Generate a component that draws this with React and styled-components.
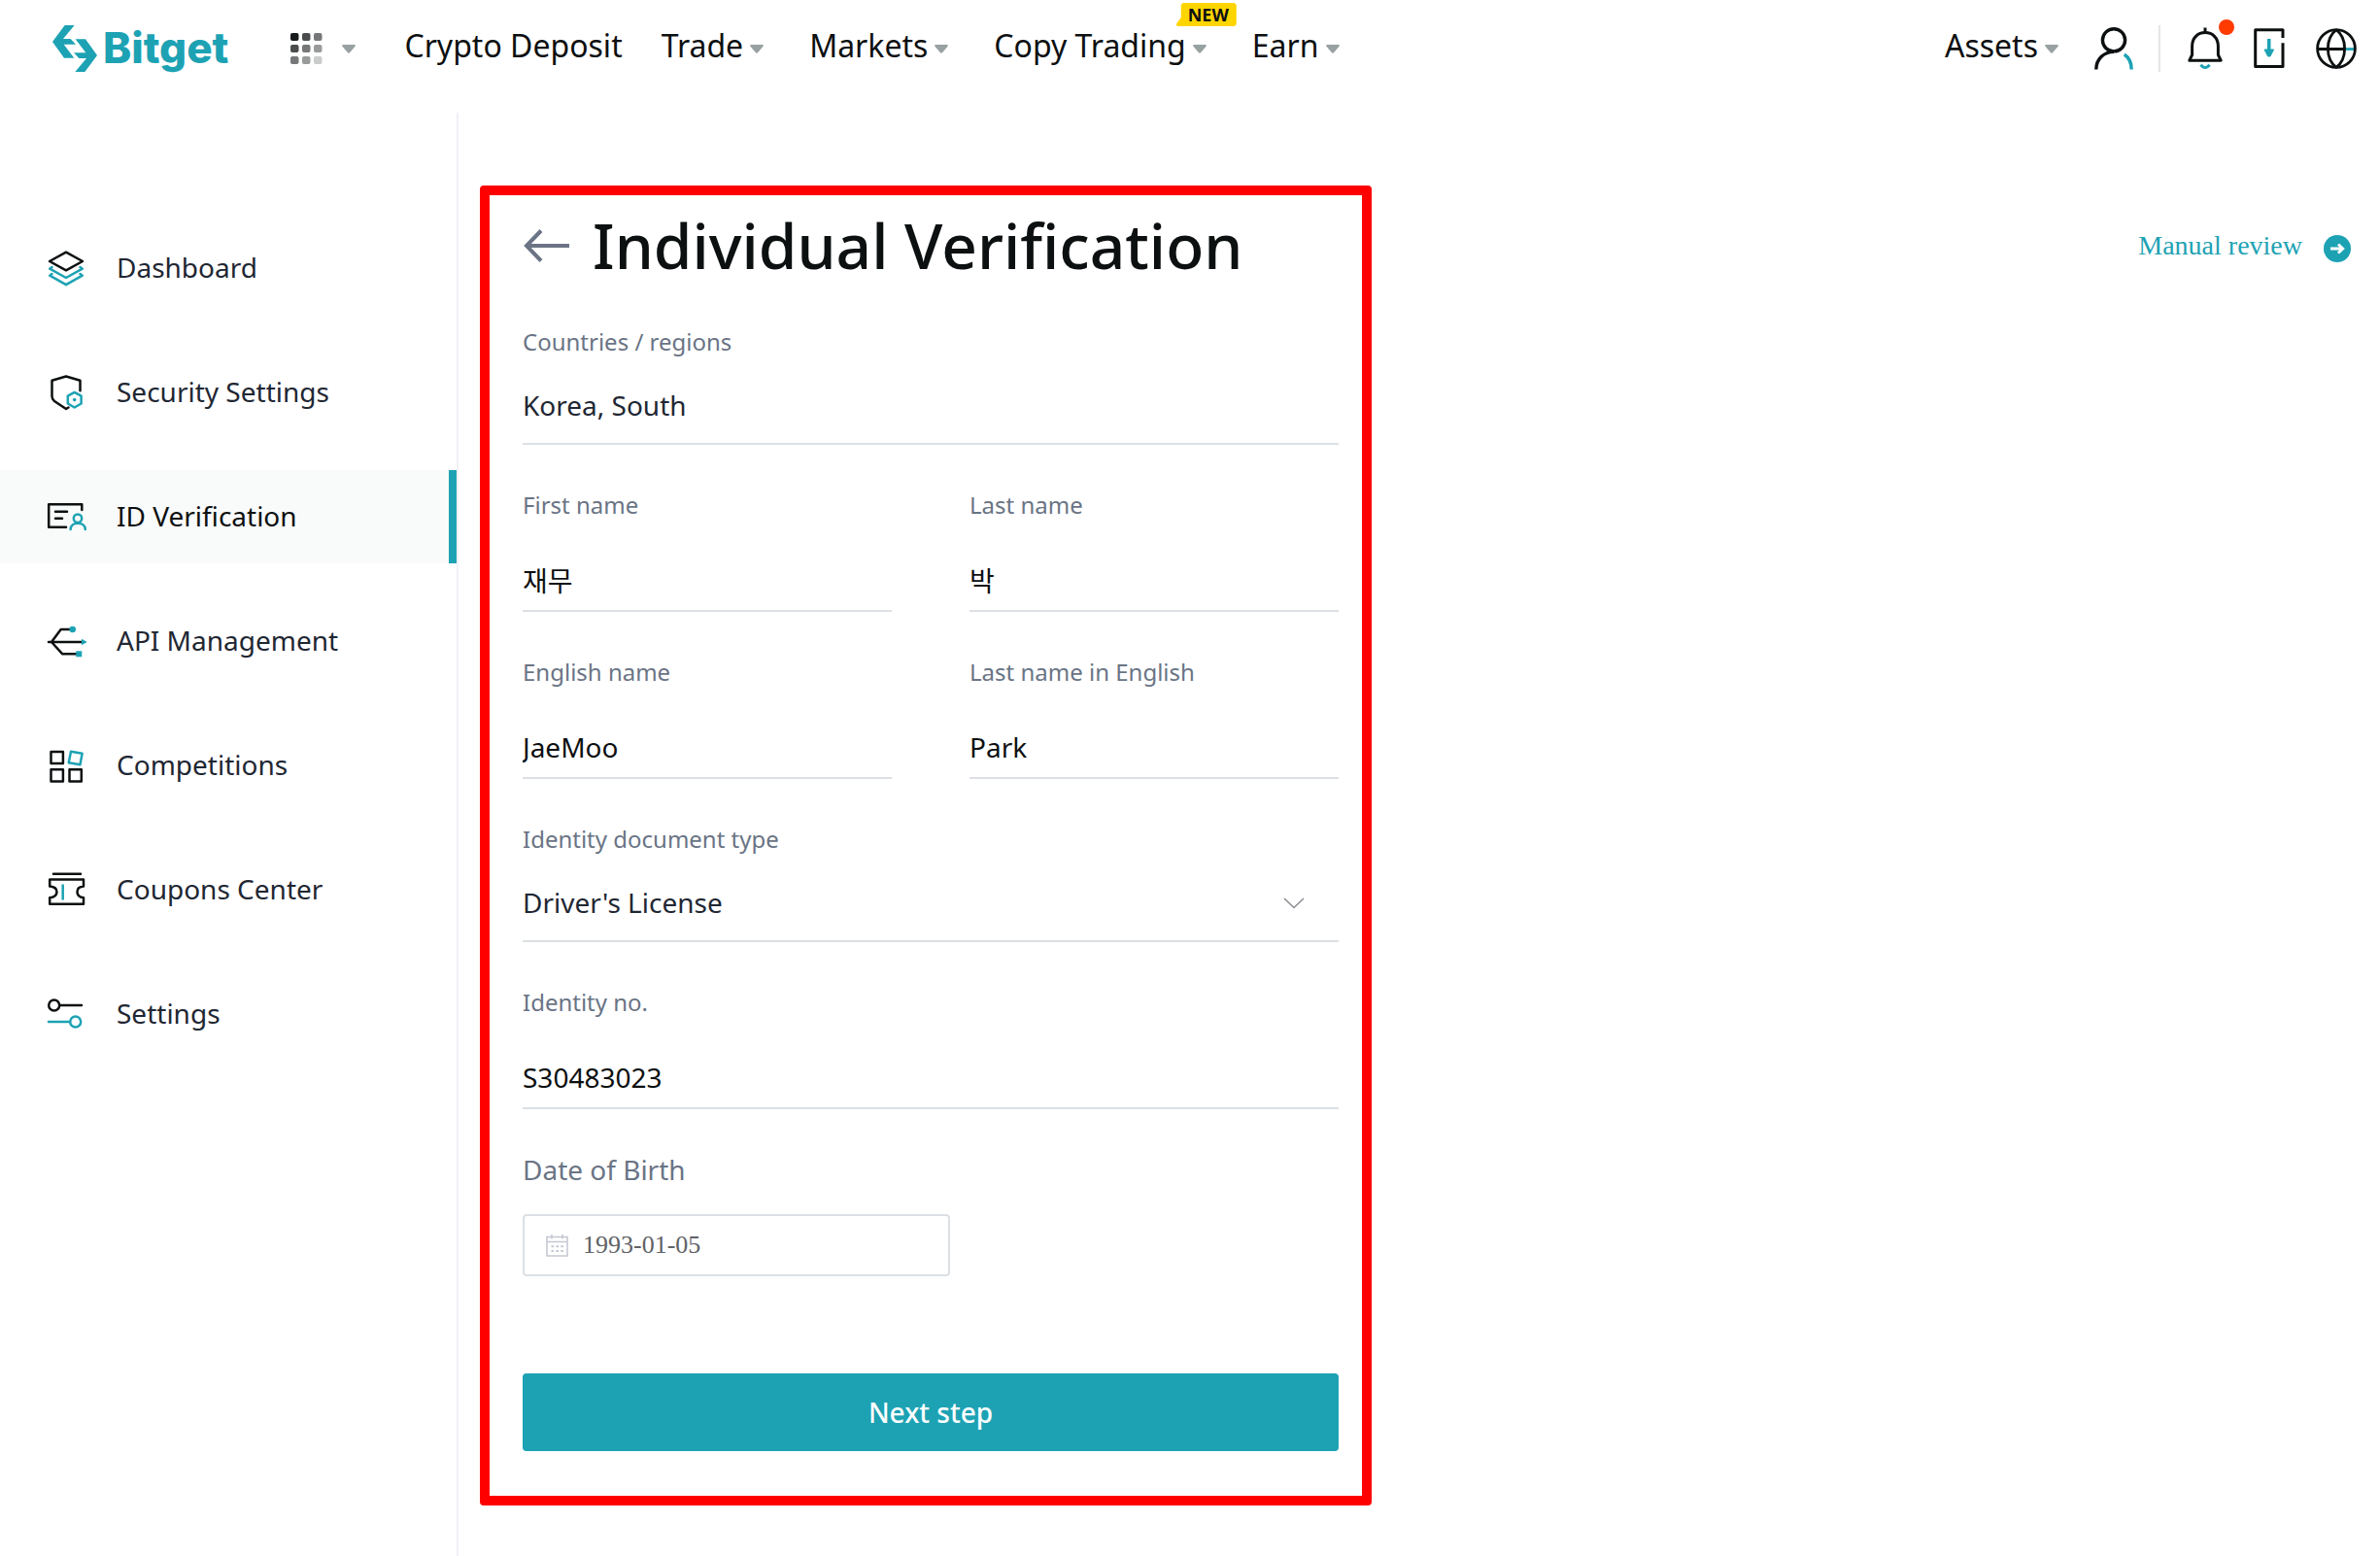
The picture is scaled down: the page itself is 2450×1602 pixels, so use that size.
import React, { useState } from 'react';
import styled, { createGlobalStyle } from 'styled-components';

const colors = {
  primary: '#1da2b4',
  black: '#0d1011',
  text: '#1f2733',
  label: '#6a7485',
  line: '#dce0e4',
  divider: '#f1f1f6',
  caret: '#98a1a1',
  active: '#f9fafa',
  frame: '#ff0000',
  alert: '#ff3b00',
  badge: '#ffd500',
};

const menu = [
  { title: 'Dashboard', Icon: DashboardIcon },
  { title: 'Security Settings', Icon: SecurityIcon },
  { title: 'ID Verification', Icon: IdIcon, active: true },
  { title: 'API Management', Icon: ApiIcon },
  { title: 'Competitions', Icon: CompetitionsIcon },
  { title: 'Coupons Center', Icon: CouponsIcon },
  { title: 'Settings', Icon: SettingsIcon },
];

const navItems = [
  { title: 'Crypto Deposit' },
  { title: 'Trade', dropdown: true },
  { title: 'Markets', dropdown: true },
  { title: 'Copy Trading', dropdown: true, badge: 'NEW' },
  { title: 'Earn', dropdown: true },
];

export default function App() {
  return (
    <>
      <GlobalStyle />
      <TopBar />
      <Layout>
        <Sidebar />
        <Content>
          <VerificationForm />
          <ManualReview href="#">
            <span>Manual review</span>
            <ArrowBadge />
          </ManualReview>
        </Content>
      </Layout>
    </>
  );
}

function TopBar() {
  return (
    <Header>
      <Logo href="#" aria-label="Bitget">
        <LogoMark />
        <span>Bitget</span>
      </Logo>
      <AppsButton type="button" aria-label="Products">
        <GridIcon />
        <Caret />
      </AppsButton>
      <Nav>
        {navItems.map(({ title, dropdown, badge }) => (
          <NavLink href="#" key={title}>
            <NavText>{title}</NavText>
            {dropdown && (
              <CaretBox>
                <Caret />
              </CaretBox>
            )}
            {badge && <Badge>{badge}</Badge>}
          </NavLink>
        ))}
      </Nav>
      <Tools>
        <NavLink href="#">
          <NavText>Assets</NavText>
          <CaretBox>
            <Caret />
          </CaretBox>
        </NavLink>
        <IconButton type="button" aria-label="Account">
          <UserIcon />
        </IconButton>
        <Separator />
        <IconButton type="button" aria-label="Notifications">
          <BellIcon />
          <Dot />
        </IconButton>
        <IconButton type="button" aria-label="Download app">
          <DownloadIcon />
        </IconButton>
        <IconButton type="button" aria-label="Language">
          <GlobeIcon />
        </IconButton>
      </Tools>
    </Header>
  );
}

function Sidebar() {
  return (
    <Aside>
      {menu.map(({ title, Icon, active }) => (
        <MenuLink href="#" key={title} $active={active}>
          <Icon />
          <span>{title}</span>
        </MenuLink>
      ))}
    </Aside>
  );
}

function VerificationForm() {
  const [values, setValues] = useState({
    country: 'Korea, South',
    firstName: '재무',
    lastName: '박',
    englishName: 'JaeMoo',
    englishLastName: 'Park',
    documentType: "Driver's License",
    identityNo: 'S30483023',
    birth: '1993-01-05',
  });

  const bind = (name) => ({
    id: name,
    value: values[name],
    onChange: (e) => setValues({ ...values, [name]: e.target.value }),
  });

  return (
    <Form onSubmit={(e) => e.preventDefault()}>
      <TitleRow>
        <BackButton type="button" aria-label="Back">
          <BackIcon />
        </BackButton>
        <Title>Individual Verification</Title>
      </TitleRow>
      <Field>
        <Label htmlFor="country">Countries / regions</Label>
        <SelectBox>
          <Select {...bind('country')}>
            <option>Korea, South</option>
          </Select>
        </SelectBox>
      </Field>
      <Columns>
        <Field>
          <Label htmlFor="firstName">First name</Label>
          <Input {...bind('firstName')} />
        </Field>
        <Field>
          <Label htmlFor="lastName">Last name</Label>
          <Input {...bind('lastName')} />
        </Field>
      </Columns>
      <Columns>
        <Field>
          <Label htmlFor="englishName">English name</Label>
          <Input {...bind('englishName')} />
        </Field>
        <Field>
          <Label htmlFor="englishLastName">Last name in English</Label>
          <Input {...bind('englishLastName')} />
        </Field>
      </Columns>
      <Field>
        <Label htmlFor="documentType">Identity document type</Label>
        <SelectBox>
          <Select {...bind('documentType')}>
            <option>Driver's License</option>
          </Select>
          <ChevronIcon />
        </SelectBox>
      </Field>
      <Field>
        <Label htmlFor="identityNo">Identity no.</Label>
        <Input {...bind('identityNo')} />
      </Field>
      <Field>
        <Label htmlFor="birth" $large>
          Date of Birth
        </Label>
        <DateBox>
          <CalendarIcon />
          <DateInput {...bind('birth')} />
        </DateBox>
      </Field>
      <SubmitButton type="submit">Next step</SubmitButton>
    </Form>
  );
}

/* icons */

function LogoMark() {
  return (
    <svg width="46" height="48" viewBox="12 18 138 144" fill={colors.primary}>
      <path d="M50 18H80L45 60H68L84 77H47L79 119H48L12 69Z" />
      <path d="M112 162H82L117 120H94L78 103H115L83 61H114L150 111Z" />
    </svg>
  );
}

function GridIcon() {
  return (
    <svg width="33" height="32" viewBox="0 0 33 32">
      {[0, 1, 2].map((row) =>
        [0, 1, 2].map((col) => (
          <rect
            key={`${row}${col}`}
            x={col * 12}
            y={row * 12}
            width="8.5"
            height="8"
            rx="2"
            fill={colors.black}
            opacity={[0.95, 0.75, 0.57, 0.42, 0.22][row + col]}
          />
        ))
      )}
    </svg>
  );
}

function Caret() {
  return (
    <svg width="14" height="9" viewBox="0 0 14 9">
      <path
        d="M1.2 0H12.8Q14.6.2 13.6 1.8L8.2 8.1Q7 9.2 5.8 8.1L.4 1.8Q-.6.2 1.2 0Z"
        fill={colors.caret}
      />
    </svg>
  );
}

function UserIcon() {
  return (
    <Stroke width="40" height="44" viewBox="0 0 40 44" strokeWidth="3.4">
      <circle cx="20" cy="13.3" r="11.6" />
      <path d="M1.8 43.5C1.8 33 9.5 25.4 20 25.4" />
      <path d="M30.8 28C35.5 31.3 38.2 36.5 38.2 43.5" stroke={colors.primary} />
    </Stroke>
  );
}

function BellIcon() {
  return (
    <Stroke width="36" height="44" viewBox="0 0 36 44" strokeWidth="3">
      <path d="M18 .5V5.5" />
      <path d="M4.6 19.5C4.6 11 10.5 5.6 18 5.6S31.4 11 31.4 19.5V28.5L34.2 34.2H1.8L4.6 28.5Z" />
      <path d="M13.4 38.8Q18 44.6 22.6 38.8" stroke={colors.primary} />
    </Stroke>
  );
}

function DownloadIcon() {
  return (
    <Stroke width="32" height="42" viewBox="0 0 32 42" strokeWidth="3">
      <path d="M30 10V1.8H1.7V39.4H30V15.2" />
      <path d="M15.7 11V25" stroke={colors.primary} strokeWidth="3.6" />
      <path d="M11 22H20.6L17 29H14.6Z" fill={colors.primary} stroke={colors.primary} strokeWidth="1" />
    </Stroke>
  );
}

function GlobeIcon() {
  return (
    <Stroke width="42" height="42" viewBox="0 0 42 42" strokeWidth="2.8">
      <path d="M30 21.5H39" stroke={colors.primary} />
      <circle cx="21" cy="21" r="19.4" />
      <path d="M21 1.6C9.5 10.5 9.5 31.5 21 40.4C32.5 31.5 32.5 10.5 21 1.6M2 21.5H29" />
    </Stroke>
  );
}

function DashboardIcon() {
  return (
    <MenuIcon viewBox="0 0 40 40">
      <path d="M20 3.7L37 13L20 22.3L3 13Z" />
      <g stroke={colors.primary}>
        <path d="M5.5 19L3.2 20.7L20 30L36.8 20.7L34.5 19" />
        <path d="M5.5 26L3.2 27.7L20 37.2L36.8 27.7L34.5 26" />
      </g>
    </MenuIcon>
  );
}

function SecurityIcon() {
  return (
    <MenuIcon viewBox="0 0 40 40">
      <path d="M34.5 18.2V7.7L20 3.5L5.5 7.7V24Q5.5 27 8 29L20 37L22.5 35.5" />
      <path d="M28.7 19.9L35.6 23.7V31.5L28.7 35.5L21.8 31.5V23.7Z" stroke={colors.primary} />
      <circle cx="28.7" cy="27.6" r="1.8" fill={colors.primary} stroke="none" />
    </MenuIcon>
  );
}

function IdIcon() {
  return (
    <MenuIcon viewBox="0 0 40 40">
      <path d="M36.3 13V7.3H2.2V30.7H20" />
      <path d="M9 14.7H21M9 21.7H16" />
      <g stroke={colors.primary}>
        <circle cx="32" cy="21.7" r="4.2" />
        <path d="M24.6 33C24.6 24.5 39.8 24.5 39.8 33" />
      </g>
    </MenuIcon>
  );
}

function ApiIcon() {
  return (
    <MenuIcon viewBox="0 0 40 40">
      <path d="M2 21H37M26 8H14.7L5 21L16.3 33.3H31" />
      <g fill={colors.primary} stroke="none">
        <circle cx="26.7" cy="8" r="3.3" />
        <path d="M36 17.7L41.7 21L36 24.3Z" />
        <path d="M30.3 30.3H36.3V36.3H30.3Z" />
      </g>
    </MenuIcon>
  );
}

function CompetitionsIcon() {
  return (
    <MenuIcon viewBox="0 0 40 40">
      <path d="M4.5 6H16.9V18H4.5ZM4.5 24.3H16.9V36.5H4.5ZM23.5 24.3H35.8V36.5H23.5Z" />
      <path d="M25 5.7L36.6 7.8L34.5 19.3L22.7 17.2Z" stroke={colors.primary} />
    </MenuIcon>
  );
}

function CouponsIcon() {
  return (
    <MenuIcon viewBox="0 0 40 40">
      <path d="M7 3.7H35" />
      <path d="M3.2 9.5H38V16.5Q31.5 17 31.5 22.3T38 28.2V34.8H3.2V28.2Q10.5 27.5 10.5 22.3T3.2 16.5Z" />
      <path d="M16.7 15.5V29.5" stroke={colors.primary} />
    </MenuIcon>
  );
}

function SettingsIcon() {
  return (
    <MenuIcon viewBox="0 0 40 40">
      <circle cx="7.7" cy="11" r="5.5" />
      <path d="M13.5 11H36" />
      <g stroke={colors.primary}>
        <circle cx="29.7" cy="28" r="5.5" />
        <path d="M2 28H24" />
      </g>
    </MenuIcon>
  );
}

function BackIcon() {
  return (
    <svg width="48" height="34" viewBox="0 0 48 34" fill="none" stroke={colors.label}>
      <path d="M19 1.5L4 17L19 32.5M4 17H48" strokeWidth="4" />
    </svg>
  );
}

function ArrowBadge() {
  return (
    <svg width="28" height="28" viewBox="0 0 28 28">
      <circle cx="14" cy="14" r="14" fill={colors.primary} />
      <path d="M7 14H20M15 9.5L19.8 14L15 18.5" fill="none" stroke="#fff" strokeWidth="2.8" />
    </svg>
  );
}

function ChevronIcon() {
  return (
    <svg width="22" height="12" viewBox="0 0 22 12" fill="none" stroke="#8c8f93">
      <path d="M1 1L11 10.5L21 1" strokeWidth="1.6" />
    </svg>
  );
}

function CalendarIcon() {
  return (
    <svg width="23" height="23" viewBox="0 0 23 23" fill="none" stroke="#c3c7d1">
      <path d="M1 2.5H22V22H1ZM1 7.5H22M6 0V4.5M17 0V4.5" strokeWidth="1.5" />
      <path d="M5.5 12.3H18M5.5 17H18" strokeWidth="2" strokeDasharray="2.6 2.3" />
    </svg>
  );
}

/* styles */

const GlobalStyle = createGlobalStyle`
  * {
    box-sizing: border-box;
  }

  body {
    margin: 0;
    background-color: #fff;
    color: ${colors.black};
    font-family: 'Noto Sans', 'Noto Sans CJK KR', sans-serif;
    font-size: 28px;
  }

  a {
    color: inherit;
    text-decoration: none;
  }

  button,
  input,
  select {
    font: inherit;
    color: inherit;
    padding: 0;
    border: none;
    background: none;
  }

  svg {
    display: block;
    flex-shrink: 0;
    overflow: visible;
  }
`;

const Stroke = styled.svg`
  fill: none;
  stroke: ${colors.black};
  stroke-linejoin: round;
`;

const MenuIcon = styled.svg`
  width: 40px;
  height: 40px;
  fill: none;
  stroke: ${colors.black};
  stroke-width: 2.5;
  stroke-linejoin: round;
  stroke-linecap: round;
`;

const Header = styled.header`
  display: flex;
  align-items: center;
  height: 100px;
  margin-bottom: 16px;
  padding: 0 24px 0 54px;
`;

const Logo = styled.a`
  display: flex;
  align-items: center;
  gap: 6px;
  color: ${colors.primary};
  font-family: Inter, sans-serif;
  font-size: 44px;
  font-weight: 800;
  line-height: 48px;

  > span {
    padding-bottom: 2px;
  }
`;

const AppsButton = styled.button`
  display: flex;
  align-items: center;
  gap: 20px;
  margin-left: 64px;
`;

const Nav = styled.nav`
  display: flex;
  gap: 40px;
  margin-left: 50px;
`;

const NavLink = styled.a`
  position: relative;
  display: flex;
  align-items: center;
  font-size: 32px;
  line-height: 44px;
`;

const NavText = styled.span`
  padding-bottom: 6px;
`;

const CaretBox = styled.span`
  display: flex;
  justify-content: center;
  width: 28px;
`;

const Badge = styled.span`
  position: absolute;
  top: -22px;
  right: -24px;
  width: 62px;
  height: 24px;
  padding-left: 4px;
  background-color: ${colors.badge};
  clip-path: polygon(5px 2px, 7px 0, 60px 0, 62px 2px, 62px 22px, 60px 24px, 1px 24px, 0 22px, 5px 15px);
  font-size: 18px;
  font-weight: 700;
  line-height: 24px;
  text-align: center;
`;

const Tools = styled.div`
  display: flex;
  align-items: center;
  margin-left: auto;
`;

const IconButton = styled.button`
  position: relative;
  margin-left: 32px;

  &:first-of-type {
    margin-left: 30px;
  }
`;

const Separator = styled.span`
  width: 2px;
  height: 48px;
  margin: 0 -4px 0 26px;
  background-color: #e6e6e6;
`;

const Dot = styled.span`
  position: absolute;
  top: -8px;
  right: -12px;
  width: 16px;
  height: 16px;
  border-radius: 50%;
  background-color: ${colors.alert};
`;

const Layout = styled.div`
  display: flex;
  min-height: calc(100vh - 116px);
`;

const Aside = styled.nav`
  display: flex;
  flex-direction: column;
  gap: 32px;
  flex: 0 0 472px;
  padding-top: 112px;
  border-right: 2px solid ${colors.divider};
`;

const MenuLink = styled.a`
  display: flex;
  align-items: center;
  gap: 32px;
  height: 96px;
  padding-left: 48px;
  border-right: 8px solid ${({ $active }) => ($active ? colors.primary : 'transparent')};
  background-color: ${({ $active }) => ($active ? colors.active : 'transparent')};
  color: ${({ $active }) => ($active ? colors.black : colors.text)};

  > span {
    padding-bottom: 2px;
  }
`;

const Content = styled.main`
  display: flex;
  flex: 1;
  align-items: flex-start;
  justify-content: space-between;
  padding: 75px 30px 50px 22px;
`;

const ManualReview = styled.a`
  display: flex;
  align-items: center;
  gap: 22px;
  margin-top: 46px;
  color: ${colors.primary};
  font-family: 'Liberation Serif', serif;

  > span {
    padding-bottom: 6px;
  }
`;

const Form = styled.form`
  display: flex;
  flex-direction: column;
  flex: 0 1 918px;
  padding: 15px 24px 46px 34px;
  border: 10px solid ${colors.frame};
  border-radius: 4px;
`;

const TitleRow = styled.div`
  display: flex;
  align-items: center;
  gap: 24px;
`;

const BackButton = styled.button`
  display: flex;
`;

const Title = styled.h1`
  margin: 0;
  font-size: 64px;
  font-weight: 500;
  line-height: 74px;
`;

const Columns = styled.div`
  display: grid;
  grid-template-columns: 1fr 1fr;
  gap: 80px;
`;

const Field = styled.div`
  display: flex;
  flex-direction: column;
  min-width: 0;
  margin-top: 48px;
`;

const Label = styled.label`
  color: ${colors.label};
  font-size: ${({ $large }) => ($large ? '28px' : '24px')};
  line-height: 28px;
`;

const Input = styled.input`
  width: 100%;
  height: 64px;
  margin-top: 32px;
  border-bottom: 2px solid ${colors.line};
  border-radius: 0;
  outline: none;
`;

const SelectBox = styled.div`
  position: relative;
  margin-top: 12px;

  > svg {
    position: absolute;
    top: 34px;
    right: 35px;
    pointer-events: none;
  }
`;

const Select = styled.select`
  display: block;
  width: 100%;
  height: 80px;
  appearance: none;
  border-bottom: 2px solid ${colors.line};
  border-radius: 0;
  color: ${colors.text};
  outline: none;
`;

const DateBox = styled.div`
  position: relative;
  width: 440px;
  max-width: 100%;
  margin-top: 32px;

  > svg {
    position: absolute;
    top: 21px;
    left: 24px;
  }
`;

const DateInput = styled.input`
  display: block;
  width: 100%;
  height: 64px;
  padding-left: 60px;
  border: 2px solid ${colors.line};
  border-radius: 4px;
  color: #606266;
  font-family: 'Liberation Serif', serif;
  font-size: 26px;
`;

const SubmitButton = styled.button`
  height: 80px;
  margin-top: 100px;
  border-radius: 4px;
  background-color: ${colors.primary};
  color: #fff;
  font-weight: 500;
`;
